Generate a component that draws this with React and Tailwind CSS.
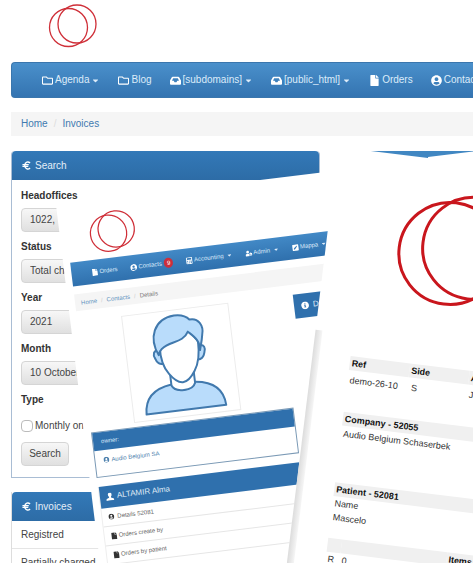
import React from "react";
import {
  FaRegFolder,
  FaFile,
  FaUserCircle,
  FaCalculator,
  FaUserCog,
  FaPenSquare,
  FaInfoCircle,
  FaCaretDown,
} from "react-icons/fa";

const selects = [
  { id: "headoffices", label: "Headoffices", value: "1022," },
  { id: "status", label: "Status", value: "Total charged" },
  { id: "year", label: "Year", value: "2021" },
  { id: "month", label: "Month", value: "10 October" },
];

function Tray({ className }) {
  return (
    <svg className={className} viewBox="0 0 12 10" fill="currentColor" aria-hidden="true">
      <path
        fillRule="evenodd"
        d="M3 1H9Q9.800 1 10.200 1.800L12 5V8.500Q12 9.500 11 9.500H1Q0 9.500 0 8.500V5L1.800 1.800Q2.200 1 3 1ZM3.400 2.600L2.200 5.200H4L5 6.800H7L8 5.200H9.800L8.600 2.600Z"
      />
    </svg>
  );
}

function Euro({ className }) {
  return (
    <svg className={className} viewBox="0 0 10 10" fill="none" stroke="currentColor" strokeWidth="1.5" aria-hidden="true">
      <path d="M9 2.200C7 0.300 3.400 0.600 3 5C3.400 9.400 7 9.700 9 7.800" />
      <path d="M0.500 4H7.500M0.500 6H7" strokeWidth="1.200" />
    </svg>
  );
}

function Person({ className }) {
  return (
    <svg className={className} viewBox="0 0 10 10" fill="currentColor" aria-hidden="true">
      <path d="M5 0C6.800 0 7.400 1.300 7.300 2.800C7.200 4.200 6.600 4.900 6.200 5.300V6.300L9.200 7.600Q10 8 10 9V10H0V9Q0 8 0.800 7.600L3.800 6.300V5.300C3.400 4.900 2.800 4.200 2.700 2.800C2.600 1.300 3.200 0 5 0Z" />
    </svg>
  );
}

const mainNav = [
  { icon: FaRegFolder, label: "Agenda", caret: true },
  { icon: FaRegFolder, label: "Blog" },
  { icon: Tray, label: "[subdomains]", caret: true },
  { icon: Tray, label: "[public_html]", caret: true },
  { icon: FaFile, label: "Orders" },
  { icon: FaUserCircle, label: "Contacts" },
];

const sheetNav = [
  { icon: FaFile, label: "Orders" },
  { icon: FaUserCircle, label: "Contacts", badge: "9" },
  { icon: FaCalculator, label: "Accounting", caret: true },
  { icon: FaUserCog, label: "Admin", caret: true },
  { icon: FaPenSquare, label: "Mappa", caret: true },
];

function Logo({ className }) {
  return (
    <svg className={className} viewBox="0 0 50 44" fill="none" stroke="#cf2f38" strokeWidth="1.3" aria-hidden="true">
      <circle cx="20.5" cy="23.5" r="19" />
      <circle cx="29" cy="20" r="19" />
    </svg>
  );
}

function PanelHeader({ children }) {
  return (
    <h2 className="flex h-[29px] items-center gap-1 rounded-t bg-gradient-to-b from-[#3379b8] to-[#2d6ca6] px-2.5 text-[10px] text-[#e4eef8]">
      {children}
    </h2>
  );
}

function Avatar() {
  return (
    <svg className="size-full" viewBox="0 0 107 107" fill="#b9dcfb" stroke="#4179ad" strokeWidth="2" strokeLinejoin="round" aria-hidden="true">
      <path d="M12.500 101C13 84 23 76 41 74C44 83 62 83 65 74C83 76 93 84 93.500 101Z" />
      <path d="M41 60V75C44 83 62 83 65 75V60Z" fill="#fff" />
      <path d="M33 38C27 37 26 42 28 46C29 50 32 53 36 52ZM73 38C79 37 80 42 78 46C77 50 74 53 70 52Z" />
      <path d="M34 34C33 48 35 56 40 63C44 69 49 73 53 73C57 73 62 69 66 63C71 56 73 48 73 34L64 20L36 30Z" fill="#fff" />
      <path d="M32 43C24 25 31 6 52 5C59 5 64 7 67 11C76 10 81 19 78 28C77 34 75 39 74 43C75 33 70 29 64 23C58 34 44 30 36 37Q33 39 32 43Z" />
    </svg>
  );
}

function ContactSheet() {
  return (
    <section className="absolute left-[56px] top-[205px] h-[480px] w-[290px] origin-top-left -rotate-7 bg-white pl-[7px] text-[6px] leading-[8px] text-[#666]">
      <div className="h-[59px] pl-[22px] pt-3">
        <Logo className="h-[42px] w-[48px]" />
      </div>
      <nav className="flex h-6 items-center gap-[13px] bg-gradient-to-b from-[#4289c6] to-[#2f70ad] pl-5 text-[#dbeafa]">
        {sheetNav.map(({ icon: Icon, label, badge, caret }) => (
          <a key={label} href="#" className="flex shrink-0 items-center gap-px">
            <Icon className="size-[7px] text-white" />
            <span>{label}</span>
            {badge && <span className="ml-px rounded-full bg-[#cc2f3c] px-[3px] py-px text-white">{badge}</span>}
            {caret && <FaCaretDown className="ml-0.5 size-[6px]" />}
          </a>
        ))}
      </nav>
      <div className="mt-2 flex h-[17px] items-center gap-1 bg-[#f5f5f5] pl-1.5 text-[#5f93c0]">
        <a href="#">Home</a>
        <span className="text-[#ccc]">/</span>
        <a href="#">Contacts</a>
        <span className="text-[#ccc]">/</span>
        <span className="text-[#777]">Details</span>
      </div>
      <div className="mt-2.5 flex gap-[13px]">
        <div className="w-[204px] shrink-0">
          <div className="ml-11 size-[108px] border border-[#ececec]">
            <Avatar />
          </div>
          <div className="mt-1 h-[46px] border border-[#7a99b5]">
            <h3 className="flex h-[18px] items-center bg-[#2f70ad] px-2 text-[#dbeafa]">owner:</h3>
            <a href="#" className="flex items-center gap-0.5 px-2 pt-1.5 text-[#4d80ad]">
              <FaUserCircle className="size-[6px]" />
              Audio Belgium SA
            </a>
          </div>
          <div className="mt-[9px] border-x border-[#eee]">
            <h3 className="flex h-[22px] items-center gap-[3px] bg-[#2f70ad] px-1.5 text-[8px] text-[#dfeaf5]">
              <Person className="size-2 text-white" />
              ALTAMIR Alma
            </h3>
            <ul>
              <li className="flex h-[19px] items-center gap-[3px] border-b border-[#e6e6e6] px-1.5">
                <FaUserCircle className="size-[6px] text-[#333]" />Details 52081
              </li>
              <li className="flex h-[19px] items-center gap-px border-b border-[#e6e6e6] px-1.5">
                <FaFile className="size-[7px] text-[#333]" />Orders create by
              </li>
              <li className="flex h-[19px] items-center gap-px border-b border-[#e6e6e6] px-1.5">
                <FaFile className="size-[7px] text-[#333]" />Orders by patient
              </li>
            </ul>
          </div>
        </div>
        <button type="button" className="flex h-6 w-[60px] items-center gap-1 bg-[#2f70ad] px-[7px] text-[8px] text-[#dfeaf5]">
          <FaInfoCircle className="size-2 text-white" />
          Details
        </button>
      </div>
    </section>
  );
}

function OrderSheet() {
  return (
    <section className="absolute left-[338px] top-[147px] h-[480px] w-[300px] origin-top-left rotate-7 bg-white text-[9px] leading-[14px] text-[#333]">
      <div className="absolute bottom-0 left-0 top-[184px] w-[7px] bg-gradient-to-r from-[#dcdcdc] to-[#f6f6f6]" />
      <div className="relative pl-[38px]">
        <div className="h-[206px] pl-8 pt-[31px]">
          <svg className="h-[120px] w-[135px]" viewBox="0 0 135 120" fill="none" stroke="#c9161d" strokeWidth="3" aria-hidden="true">
            <circle cx="54" cy="61" r="51" />
            <circle cx="77" cy="53" r="51" />
          </svg>
        </div>
        <table className="w-full table-fixed text-left">
          <thead className="bg-[#f0f0f0] text-[#111]">
            <tr>
              <th className="w-[60px] pl-0.5">Ref</th>
              <th className="w-[60px] pl-0.5">Side</th>
              <th className="pl-0.5">Article</th>
            </tr>
          </thead>
          <tbody>
            <tr className="h-5">
              <td className="pl-0.5">demo-26-10</td>
              <td className="pl-1">S</td>
              <td className="pl-0.5">Jazz</td>
            </tr>
          </tbody>
        </table>
        <h3 className="mt-[22px] bg-[#f0f0f0] pl-0.5 font-bold text-[#111]">Company - 52055</h3>
        <p className="pl-0.5 pt-px">Audio Belgium Schaserbek</p>
        <h3 className="mt-[42px] bg-[#f0f0f0] pl-0.5 font-bold text-[#111]">Patient - 52081</h3>
        <p className="pl-0.5">Name</p>
        <p className="pl-0.5">Mascelo</p>
        <table className="mt-[14px] w-full table-fixed text-left">
          <thead className="bg-[#f0f0f0] text-[#111]">
            <tr>
              <th className="w-[14px]" />
              <th className="w-[106px]" />
              <th className="pl-0.5">Items</th>
            </tr>
          </thead>
          <tbody>
            <tr>
              <td className="pl-0.5">R</td>
              <td className="pl-0.5">0</td>
              <td />
            </tr>
          </tbody>
        </table>
      </div>
    </section>
  );
}

export default function App() {
  return (
    <main className="relative h-screen overflow-hidden bg-white pl-[11px] font-['Liberation_Sans',Arial,sans-serif] text-[10px] leading-4 text-[#444]">
      <header className="h-[62px] pl-[37px] pt-1">
        <Logo className="h-[44px] w-[50px]" />
      </header>
      <nav className="flex h-9 items-center gap-[18px] overflow-hidden rounded-l border border-r-0 border-[#3a76ad] bg-gradient-to-b from-[#4a90cb] to-[#3474b1] pl-[30px] text-[#dcecfa]">
        {mainNav.map(({ icon: Icon, label, caret }) => (
          <a key={label} href="#" className="flex shrink-0 items-center gap-0.5">
            <Icon className="size-[11px] text-white" />
            <span>{label}</span>
            {caret && <FaCaretDown className="size-[9px]" />}
          </a>
        ))}
      </nav>
      <div className="mt-[14px] flex h-6 items-center gap-1.5 bg-[#f5f5f5] pl-2.5 text-[#3f7ab0]">
        <a href="#">Home</a>
        <span className="text-[#ddd]">/</span>
        <a href="#">Invoices</a>
      </div>
      <div className="mt-[15px] flex gap-10">
        <div className="w-[309px] shrink-0">
          <section className="rounded-t border border-t-0 border-[#a9bdd4]">
            <PanelHeader>
              <Euro className="size-[9px] text-white" />
              Search
            </PanelHeader>
            <form className="px-[9px] pb-[11px] pt-2">
              {selects.map(({ id, label, value }) => (
                <div key={id} className="mb-[7px]">
                  <label htmlFor={id} className="mb-1 block font-bold text-[#333]">{label}</label>
                  <select
                    id={id}
                    className="block h-6 w-[120px] appearance-none rounded-sm border border-[#d5d5d5] bg-gradient-to-b from-[#f7f7f7] to-[#e0e0e0] px-2"
                  >
                    <option>{value}</option>
                  </select>
                </div>
              ))}
              <fieldset>
                <legend className="block font-bold text-[#333]">Type</legend>
                <label className="mt-2.5 flex h-4 items-center gap-0.5">
                  <input type="checkbox" className="size-3 appearance-none rounded-sm border border-[#bbb] bg-white" />
                  Monthly on
                </label>
              </fieldset>
              <button
                type="button"
                className="mt-2 block h-6 w-12 rounded-sm border border-[#d5d5d5] bg-gradient-to-b from-[#f7f7f7] to-[#e0e0e0]"
              >
                Search
              </button>
            </form>
          </section>
          <section className="mt-[14px] border border-t-0 border-[#ddd]">
            <PanelHeader>
              <Euro className="size-[9px] text-white" />
              Invoices
            </PanelHeader>
            <ul>
              <li className="flex h-7 items-center border-b border-[#e5e5e5] px-[9px]">Registred</li>
              <li className="flex h-7 items-center px-[9px]">Partially charged</li>
            </ul>
          </section>
        </div>
        <div className="min-w-0 flex-1">
          <div className="h-[7px] bg-[#4187c2]" />
        </div>
      </div>
      <ContactSheet />
      <OrderSheet />
      {/* Corner of a further sheet tucked under the right-hand panel */}
      <div className="absolute left-[428px] top-[157px] h-5 w-[100px] origin-top-left -rotate-7 bg-white" />
    </main>
  );
}
